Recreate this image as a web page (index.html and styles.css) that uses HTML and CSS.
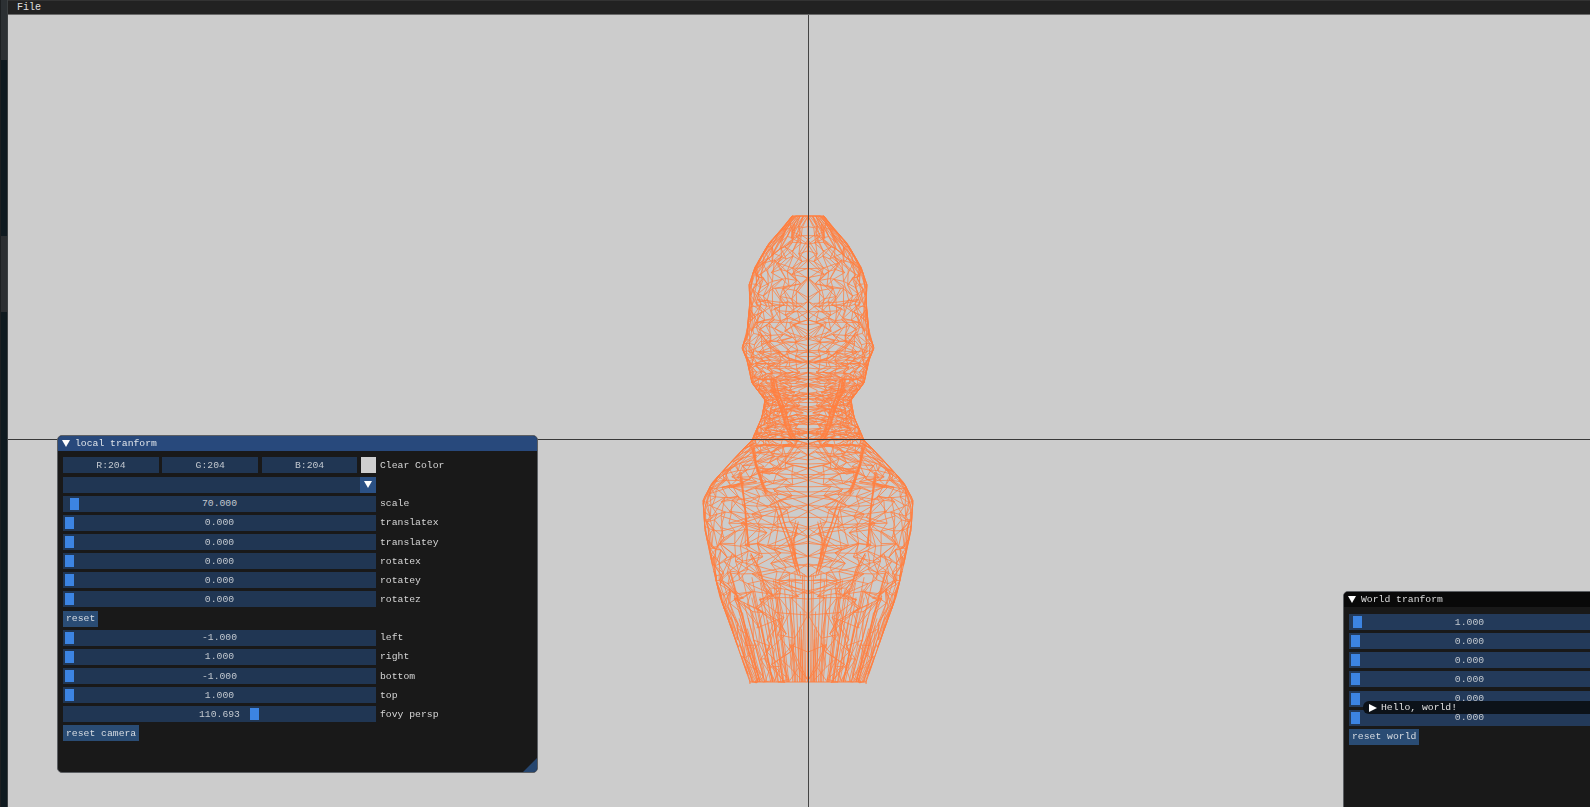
FILE: index.html
```html
<!DOCTYPE html>
<html lang="en">
<head>
<meta charset="utf-8">
<title>Viewer</title>
<link rel="stylesheet" href="styles.css">
</head>
<body>
<div class="app">
  <div class="strip">
    <div class="strip-a"></div>
    <div class="strip-b"></div>
    <div class="strip-c"></div>
    <div class="strip-d"></div>
  </div>
  <div class="main">
    <div class="menubar"><span class="menu-item">File</span></div>
    <div class="viewport">
      <canvas id="mesh" class="mesh" width="260" height="490"></canvas>
      <div class="axis-v"></div>
      <div class="axis-h"></div>

      <section class="win win-local">
        <header class="title"><svg class="tri" viewBox="0 0 8 8"><path d="M0 0h8L4 7z"/></svg><span>local tranform</span></header>
        <div class="body">
          <div class="row">
            <div class="colors">
              <div class="field"><span>R:204</span></div>
              <div class="field"><span>G:204</span></div>
              <div class="field"><span>B:204</span></div>
              <div class="swatch"></div>
            </div>
            <span class="label">Clear Color</span>
          </div>
          <div class="row">
            <div class="field combo"><span class="combo-arrow"><svg class="tri" viewBox="0 0 8 8"><path d="M0 0h8L4 7z"/></svg></span></div>
          </div>
          <div class="row"><div class="field"><i class="grab g-scale"></i><span>70.000</span></div><span class="label">scale</span></div>
          <div class="row"><div class="field"><i class="grab"></i><span>0.000</span></div><span class="label">translatex</span></div>
          <div class="row"><div class="field"><i class="grab"></i><span>0.000</span></div><span class="label">translatey</span></div>
          <div class="row"><div class="field"><i class="grab"></i><span>0.000</span></div><span class="label">rotatex</span></div>
          <div class="row"><div class="field"><i class="grab"></i><span>0.000</span></div><span class="label">rotatey</span></div>
          <div class="row"><div class="field"><i class="grab"></i><span>0.000</span></div><span class="label">rotatez</span></div>
          <div class="row"><button class="btn">reset</button></div>
          <div class="row"><div class="field"><i class="grab"></i><span>-1.000</span></div><span class="label">left</span></div>
          <div class="row"><div class="field"><i class="grab"></i><span>1.000</span></div><span class="label">right</span></div>
          <div class="row"><div class="field"><i class="grab"></i><span>-1.000</span></div><span class="label">bottom</span></div>
          <div class="row"><div class="field"><i class="grab"></i><span>1.000</span></div><span class="label">top</span></div>
          <div class="row"><div class="field"><i class="grab g-fovy"></i><span>110.693</span></div><span class="label">fovy persp</span></div>
          <div class="row"><button class="btn">reset camera</button></div>
        </div>
        <div class="grip"></div>
      </section>

      <section class="win win-world">
        <header class="title title-dim"><svg class="tri" viewBox="0 0 8 8"><path d="M0 0h8L4 7z"/></svg><span>World tranform</span></header>
        <div class="body body-world">
          <div class="row"><div class="field field-world"><i class="grab g-world"></i><span>1.000</span></div></div>
          <div class="row"><div class="field field-world"><i class="grab"></i><span>0.000</span></div></div>
          <div class="row"><div class="field field-world"><i class="grab"></i><span>0.000</span></div></div>
          <div class="row"><div class="field field-world"><i class="grab"></i><span>0.000</span></div></div>
          <div class="row"><div class="field field-world"><i class="grab"></i><span>0.000</span></div></div>
          <div class="row"><div class="field field-world"><i class="grab"></i><span>0.000</span></div></div>
          <div class="row"><button class="btn">reset world</button></div>
        </div>
      </section>

      <div class="hello"><svg class="tri" viewBox="0 0 8 8"><path d="M0 0l8 4-8 4z"/></svg><span>Hello, world!</span></div>
    </div>
  </div>
</div>
<script src="mesh.js"></script>
</body>
</html>
```
FILE: styles.css
```css
* { box-sizing: border-box; }
html, body { margin: 0; height: 100%; overflow: hidden; background: #ccc; }
body { font: 9.75px/1 "Liberation Mono", "DejaVu Sans Mono", monospace; color: #d8d8d8; }
.app { display: flex; width: 1590px; height: 807px; }
.strip { width: 8px; display: flex; flex-direction: column; border-left: 1px solid #1c1f21; border-right: 1px solid #3c4042; }
.strip-a { height: 60px; background: #2c3033; }
.strip-b { height: 176px; background: #0f1a20; }
.strip-c { height: 76px; background: #2b2e31; }
.strip-d { flex: 1; background: #0f1a1f; }
.main { flex: 1; display: flex; flex-direction: column; min-width: 0; }
.menubar { height: 15px; background: #222; border-top: 1px solid #333; border-bottom: 1px solid #6a6a6a; padding-left: 9px; display: flex; align-items: center; will-change: opacity; }
.menu-item { font-size: 10px; color: #e0e0e0; }
.viewport { flex: 1; position: relative; background: #ccc; overflow: hidden; }
.mesh { position: absolute; left: 670px; top: 190px; }
.axis-v { position: absolute; left: 800px; top: 0; bottom: 0; width: 1px; background: #444; }
.axis-h { position: absolute; left: 0; right: 0; top: 424px; height: 1px; background: #383838; }

.win { position: absolute; background: #191919; border: 1px solid #5c5f63; border-radius: 5px; overflow: hidden; will-change: opacity; }
.win-local { left: 49px; top: 420px; width: 481px; height: 338px; }
.win-world { left: 1335px; top: 576px; width: 262px; height: 240px; }
.title { height: 15px; background: #28497c; display: flex; align-items: center; gap: 5px; padding-left: 4px; color: #dfe4ea; }
.title-dim { background: #090909; color: #dcdcdc; }
.tri { width: 8px; height: 8px; fill: #fff; flex: none; }
.body { display: flex; flex-direction: column; gap: 3.15px; padding: 6.4px 0 0 5px; }
.body-world { padding-top: 7px; }
.row { display: flex; align-items: center; height: 16px; }
.field { position: relative; width: 313px; height: 16px; background: #203653; display: flex; align-items: center; justify-content: center; color: #c2c8cf; }
.field > span { padding-top: 1px; }
.field-world { width: 241px; background: #233a5a; }
.colors { width: 313px; display: flex; gap: 3.5px; }
.colors .field { flex: 1; width: auto; }
.swatch { width: 15px; height: 16px; background: #cfcfcf; }
.combo { justify-content: flex-end; }
.combo > .combo-arrow { width: 16px; height: 16px; padding: 0; background: #2b5185; display: flex; align-items: center; justify-content: center; }
.label { margin-left: 4px; padding-top: 1px; color: #d6d6d6; }
.grab { position: absolute; left: 2px; top: 2px; width: 8.5px; height: 12px; background: #3c84e2; }
.g-scale { left: 7px; }
.g-fovy { left: 187px; }
.g-world { left: 4px; }
.btn { height: 16px; padding: 1px 3px 0; border: 0; background: #2a4c74; color: #d8dde3; font: inherit; }
.grip { position: absolute; right: 0; bottom: 0; width: 14px; height: 14px; background: #26466f; clip-path: polygon(100% 0, 100% 100%, 0 100%); }
.hello { position: absolute; left: 1355px; top: 686px; width: 240px; height: 13px; background: #0c1219; border-radius: 6px 0 0 6px; display: flex; align-items: center; gap: 4px; padding-left: 6px; color: #e0e0e0; will-change: opacity; }
```
FILE: mesh.js
```js
(function () {
  var cv = document.getElementById('mesh');
  var c = cv.getContext('2d');
  var OX = 808 - 678, OY = -205;
  var seed = 4242;
  function R() { seed = (seed * 1664525 + 1013904223) >>> 0; return (seed >>> 8) / 16777216; }
  var P = [[216,16],[227,24],[243,39],[267,53],[285,59],[300,58],[333,61],[348,66],[360,61],[383,56],[400,43],[417,46],[440,56],[463,78],[483,96],[500,105],[530,103],[563,96],[597,88],[630,76],[682,58]];
  function hw(y) {
    if (y <= P[0][0]) return P[0][1];
    for (var i = 1; i < P.length; i++) {
      if (y <= P[i][0]) {
        var t = (y - P[i-1][0]) / (P[i][0] - P[i-1][0]);
        return P[i-1][1] + t * (P[i][1] - P[i-1][1]);
      }
    }
    return P[P.length-1][1];
  }
  c.strokeStyle = '#ff7f40';
  function seg(a, b, w, al) {
    c.lineWidth = w || 0.85; c.globalAlpha = al || 0.9;
    c.beginPath();
    c.moveTo(OX + a[0], OY + a[1]); c.lineTo(OX + b[0], OY + b[1]);
    c.moveTo(OX - a[0], OY + a[1]); c.lineTo(OX - b[0], OY + b[1]);
    c.stroke();
  }
  function spacing(y) {
    if (y < 300) return 11;
    if (y < 345) return 8;
    if (y < 375) return 5;
    if (y < 445) return 3.2;
    if (y < 500) return 7;
    if (y < 600) return 10;
    return 15;
  }
  function web(M, scale, skip) {
    var levels = [], y = 216;
    while (y < 682) { levels.push(y); y += spacing(y) * scale; }
    levels.push(682);
    var g = levels.map(function (ly, i) {
      var row = [];
      for (var j = 0; j <= M; j++) {
        var jj = j + (i % 2 ? .5 : 0) + (R() - .5) * .8;
        if (j === 0) jj = 0;
        if (j === M) jj = M;
        jj = Math.min(M, Math.max(0, jj));
        var sy = spacing(ly) * scale;
        var yy = ly + ((i === 0 || i === levels.length - 1) ? 0 : (R() - .5) * sy * .9);
        row.push([hw(yy) * Math.sin(jj / M * Math.PI / 2), yy]);
      }
      return row;
    });
    for (var i = 0; i < g.length - 1; i++) {
      var low = g[i][0][1] > 600;
      for (var j = 0; j <= M; j++) {
        if (R() > skip) seg(g[i][j], g[i+1][j]);
        if (j < M) {
          if (R() > (low ? .75 : skip)) seg(g[i][j], g[i][j+1]);
          if (R() > (low ? .7 : skip + .1)) {
            if (i % 2) seg(g[i][j+1], g[i+1][j]); else seg(g[i][j], g[i+1][j+1]);
          }
        }
      }
    }
  }
  function strand(pts, n, spread) {
    for (var k = 0; k < n; k++) {
      var ox = (R() - .5) * spread, oy = (R() - .5) * spread, prev = null;
      for (var i = 0; i < pts.length; i++) {
        var cur = [pts[i][0] + ox + (R() - .5) * 2, pts[i][1] + oy + (R() - .5) * 2];
        if (prev) seg(prev, cur);
        prev = cur;
      }
    }
  }
  web(10, 1, .12);
  web(7, 1.5, .18);
  // near-vertical lines running up from the base
  for (var k = 0; k < 46; k++) {
    var f = R(), top = 570 + R() * 70;
    seg([f * 58, 682], [f * hw(top), top]);
  }
  // outline
  for (var y = 216; y < 682; y += 3) seg([hw(y), y], [hw(y + 3), y + 3], 1, .95);
  seg([0, 216], [16, 216], 1, .95);
  seg([0, 682], [58, 682], 1, .95);
  // muscle strands
  strand([[6,362],[22,358],[38,346],[48,332]], 4, 3);
  strand([[6,305],[28,304],[50,300]], 2, 3);
  strand([[35,378],[32,392],[26,408],[20,428],[14,440]], 9, 6);
  strand([[55,447],[52,465],[46,482],[42,494]], 6, 3);
  strand([[68,473],[64,505],[62,530],[60,547]], 4, 3);
  strand([[8,440],[24,462],[36,472],[50,470]], 4, 6);
  strand([[44,490],[30,505],[24,525],[16,545],[8,575]], 5, 6);
  strand([[58,555],[50,570],[44,590],[34,600]], 4, 4);
  strand([[10,522],[14,540],[12,565]], 4, 5);
  strand([[4,582],[16,580],[30,584]], 2, 3);
})();
```
